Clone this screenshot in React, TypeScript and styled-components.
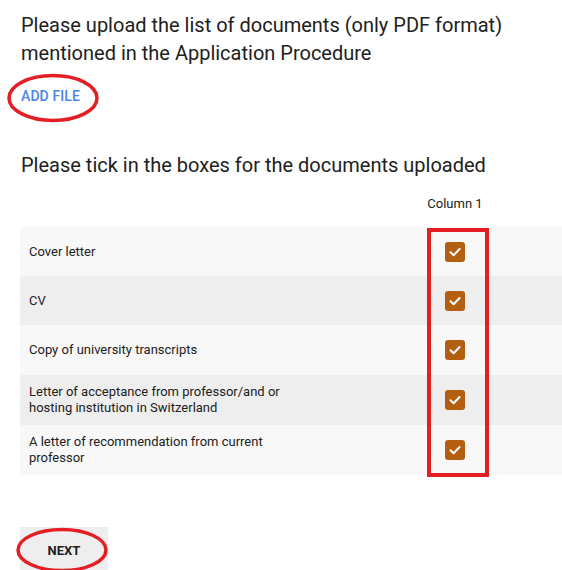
import React from "react";
import styled, { createGlobalStyle } from "styled-components";

const Global = createGlobalStyle`
  html, body { margin: 0; padding: 0; background: #ffffff; overflow: hidden; }
  body { font-family: Roboto, "Liberation Sans", Arial, sans-serif; color: #212121; }
  * { box-sizing: border-box; }
`;

const Page = styled.div`
  width: 562px;
  height: 570px;
  padding: 11px 0 0 20px;
  display: flex;
  flex-direction: column;
  overflow: hidden;
`;

const Title = styled.h2<{ $top?: number }>`
  margin: ${(p) => p.$top ?? 0}px 0 0 1px;
  font-size: 20px;
  line-height: 28px;
  font-weight: 400;
  color: #212121;
`;

const Annotated = styled.div<{ $top: number; $left?: number }>`
  position: relative;
  align-self: flex-start;
  display: flex;
  margin-top: ${(p) => p.$top}px;
  margin-left: ${(p) => p.$left ?? 0}px;
`;

const Ellipse = styled.svg`
  position: absolute;
  pointer-events: none;
  overflow: visible;
`;

const LinkButton = styled.button`
  margin: 0;
  padding: 0;
  border: none;
  background: none;
  font-family: Roboto, "Liberation Sans", Arial, sans-serif;
  font-size: 14px;
  font-weight: 500;
  line-height: 20px;
  color: #4a86e8;
  letter-spacing: 0.1px;
  cursor: pointer;
`;

const Table = styled.div`
  position: relative;
  width: 542px;
  display: flex;
  flex-direction: column;
`;

const HeaderRow = styled.div`
  height: 48px;
  display: grid;
  grid-template-columns: 396px 78px 1fr;
  align-items: center;
`;

const ColHead = styled.div`
  font-size: 13px;
  color: #212121;
  text-align: center;
`;

const Row = styled.div<{ $shade: boolean; $h: number }>`
  height: ${(p) => p.$h}px;
  display: grid;
  grid-template-columns: 396px 78px 1fr;
  align-items: center;
  background: ${(p) => (p.$shade ? "#eeeeee" : "#f8f8f8")};
`;

const Label = styled.div`
  padding-left: 9px;
  max-width: 290px;
  font-size: 13px;
  line-height: 16px;
  color: #212121;
`;

const BoxCell = styled.div`
  display: flex;
  justify-content: center;
  align-items: center;
`;

const Box = styled.span`
  width: 20px;
  height: 20px;
  border-radius: 3px;
  background: #b45f10;
  display: flex;
  align-items: center;
  justify-content: center;
`;

const Frame = styled.div`
  position: absolute;
  left: 407px;
  top: 49px;
  width: 62px;
  height: 249px;
  border: 4px solid #e31e24;
  pointer-events: none;
`;

const NextButton = styled.button`
  margin: 0;
  width: 88px;
  height: 48px;
  border: none;
  background: #eeeeee;
  font-family: Roboto, "Liberation Sans", Arial, sans-serif;
  font-size: 13px;
  font-weight: 700;
  color: #212121;
  padding: 0 0 1px 0;
  cursor: pointer;
`;

const docs = [
  { label: "Cover letter", h: 49 },
  { label: "CV", h: 49 },
  { label: "Copy of university transcripts", h: 50 },
  { label: "Letter of acceptance from professor/and or hosting institution in Switzerland", h: 50 },
  { label: "A letter of recommendation from current professor", h: 50 },
];

const Check = () => (
  <svg width="14" height="14" viewBox="0 0 14 14">
    <path d="M2.5 7.2 L5.6 10.2 L11.6 4" fill="none" stroke="#ffffff" strokeWidth="2" strokeLinecap="round" strokeLinejoin="round" />
  </svg>
);

export default function App() {
  return (
    <>
      <Global />
      <Page>
        <Title>
          Please upload the list of documents (only PDF format)
          <br />
          mentioned in the Application Procedure
        </Title>
        <Annotated $top={19} $left={1}>
          <LinkButton>ADD FILE</LinkButton>
          <Ellipse style={{ left: -14, top: -13 }} width="92" height="50">
            <ellipse cx="46" cy="25" rx="44" ry="22.5" fill="none" stroke="#e31e24" strokeWidth="3.5" />
          </Ellipse>
        </Annotated>
        <Title $top={45}>Please tick in the boxes for the documents uploaded</Title>
        <Table>
          <HeaderRow>
            <div />
            <ColHead>Column 1</ColHead>
            <div />
          </HeaderRow>
          {docs.map((d, i) => (
            <Row key={d.label} $shade={i % 2 === 1} $h={d.h}>
              <Label>{d.label}</Label>
              <BoxCell>
                <Box>
                  <Check />
                </Box>
              </BoxCell>
              <div />
            </Row>
          ))}
          <Frame />
        </Table>
        <Annotated $top={52}>
          <NextButton>NEXT</NextButton>
          <Ellipse style={{ left: -4, top: 0 }} width="92" height="44">
            <ellipse cx="46" cy="23" rx="44" ry="20.5" fill="none" stroke="#e31e24" strokeWidth="3.5" />
          </Ellipse>
        </Annotated>
      </Page>
    </>
  );
}
